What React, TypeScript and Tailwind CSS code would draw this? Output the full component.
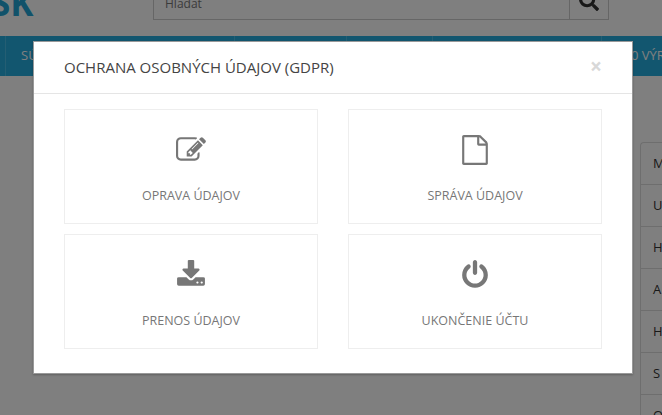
import { FaSearch } from 'react-icons/fa';

const sideLetters = ['M', 'U', 'H', 'A', 'H', 'S', 'O'];

const tiles = [
  {
    label: 'OPRAVA ÚDAJOV',
    d: 'M888 1184l116-116-152-152-116 116v56h96v96h56zm440-720q-16-16-33 1l-350 350q-17 17-1 33t33-1l350-350q17-17 1-33zm80 594v190q0 119-84.5 203.5t-203.5 84.5h-832q-119 0-203.5-84.5t-84.5-203.5v-832q0-119 84.5-203.5t203.5-84.5h832q63 0 117 25 15 7 18 23 3 17-9 29l-49 49q-14 14-32 8-23-6-45-6h-832q-66 0-113 47t-47 113v832q0 66 47 113t113 47h832q66 0 113-47t47-113v-126q0-13 9-22l64-64q15-15 35-7t20 29zm-96-738l288 288-672 672h-288v-288zm444 132l-92 92-288-288 92-92q28-28 68-28t68 28l152 152q28 28 28 68t-28 68z',
  },
  {
    label: 'SPRÁVA ÚDAJOV',
    d: 'M1596 380q28 28 48 76t20 88v1152q0 40-28 68t-68 28h-1344q-40 0-68-28t-28-68v-1600q0-40 28-68t68-28h896q40 0 88 20t76 48zm-444-244v376h376q-10-29-22-41l-313-313q-12-12-41-22zm384 1528v-1024h-416q-40 0-68-28t-28-68v-416h-768v1536h1280z',
  },
  {
    label: 'PRENOS ÚDAJOV',
    d: 'M1344 1344q0-26-19-45t-45-19-45 19-19 45 19 45 45 19 45-19 19-45zm256 0q0-26-19-45t-45-19-45 19-19 45 19 45 45 19 45-19 19-45zm128-224v320q0 40-28 68t-68 28h-1472q-40 0-68-28t-28-68v-320q0-40 28-68t68-28h465l135 136q58 56 136 56t136-56l136-136h464q40 0 68 28t28 68zm-325-569q17 41-14 70l-448 448q-18 19-45 19t-45-19l-448-448q-31-29-14-70 17-39 59-39h256v-448q0-26 19-45t45-19h256q26 0 45 19t19 45v448h256q42 0 59 39z',
  },
  {
    label: 'UKONČENIE ÚČTU',
    d: 'M1664 896q0 156-61 298t-164 245-245 164-298 61-298-61-245-164-164-245-61-298q0-182 80.5-343t226.5-270q43-32 95.5-25t83.5 50q32 42 24.5 94.5t-49.5 84.5q-98 74-151.5 181t-53.5 228q0 104 40.5 198.5t109.5 163.5 163.5 109.5 198.5 40.5 198.5-40.5 163.5-109.5 109.5-163.5 40.5-198.5q0-121-53.5-228t-151.5-181q-42-32-49.5-84.5t24.5-94.5q31-43 84-50t95 25q146 109 226.5 270t80.5 343zm-640-768v640q0 52-38 90t-90 38-90-38-38-90v-640q0-52 38-90t90-38 90 38 38 90z',
  },
];

function Tile({ d, label }: { d: string; label: string }) {
  return (
    <a className="flex h-[115px] flex-col items-center border border-[#eeeeee] text-[#777777]">
      <svg viewBox="0 0 1792 1792" className="mt-[25px] h-[30px] w-[30px]" fill="currentColor">
        <path d={d} />
      </svg>
      <div className="mt-[22px] text-[12.5px] leading-[17px]">{label}</div>
    </a>
  );
}

export default function App() {
  return (
    <div className="relative h-[415px] w-[662px] overflow-hidden bg-white font-['Open_Sans',sans-serif]">
      {/* stránka pod dialogem */}
      <div className="-mt-[24px]">
        <div className="flex h-[60px]">
          <div className="w-[153px] overflow-hidden">
            <div className="-ml-[9px] mt-[7px] text-[35px] font-bold leading-[40px] text-[#23a5d4]">SK</div>
          </div>
          <div className="flex h-[44px] w-[456px] border border-[#cccccc]">
            <div className="flex-1 pl-[11px] pt-[18px] text-[12px] leading-[17px] text-[#777777]">Hľadať</div>
            <div className="flex w-[39px] items-start justify-center border-l border-[#cccccc] pt-[14px] text-[20px] text-[#333333]">
              <FaSearch />
            </div>
          </div>
        </div>
        <div className="flex h-[40px] overflow-hidden bg-[#24acde] pl-[5px] text-[13px] text-white">
          <div className="flex w-[229px] shrink-0 items-center border-l border-[#49bce6] pl-[15px]">SÚ</div>
          <div className="w-[112px] shrink-0 border-l border-[#49bce6]" />
          <div className="w-[86px] shrink-0 border-l border-[#49bce6]" />
          <div className="w-[169px] shrink-0 border-l border-[#49bce6]" />
          <div className="flex shrink-0 items-center whitespace-nowrap border-l border-[#49bce6] pl-[29px]">0 VÝROBKOV</div>
        </div>
        <div className="ml-[640px] mt-[66px] w-[40px] rounded-tl-[4px] border-l border-t border-[#dddddd] text-[13px] text-[#333333]">
          {sideLetters.map((l, i) => (
            <div key={i} className="flex h-[42px] items-center border-b border-[#dddddd] pl-[12px]">{l}</div>
          ))}
        </div>
      </div>

      {/* podklad dialogu */}
      <div className="absolute inset-0 bg-black/50" />

      <div className="absolute left-[33px] top-[41px] w-[600px] border border-black/40 bg-white shadow-[0_1px_2px_rgba(0,0,0,0.25)]">
        <div className="flex h-[52px] items-center justify-between border-b border-[#e5e5e5] pl-[30px] pr-[30px]">
          <h4 className="-mt-[2px] text-[15px] leading-[20px] text-[#444444]">OCHRANA OSOBNÝCH ÚDAJOV (GDPR)</h4>
          <span className="-mt-[3px] text-[21px] font-bold leading-none text-[#d8d8d8]">×</span>
        </div>
        <div className="grid grid-cols-[254px_254px] gap-x-[30px] gap-y-[10px] pb-[24px] pl-[30px] pt-[15px]">
          {tiles.map((t) => (
            <Tile key={t.label} d={t.d} label={t.label} />
          ))}
        </div>
      </div>
    </div>
  );
}
